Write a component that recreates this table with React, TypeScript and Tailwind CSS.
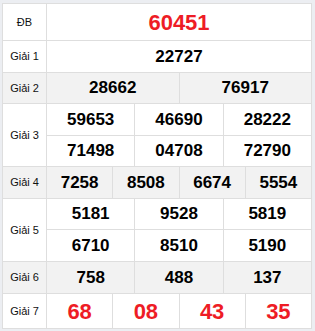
const rows: Array<{ label: string; cols: number; nums: string[]; h: number[]; gray?: boolean; big?: boolean; red?: boolean }> = [
  { label: 'ĐB', cols: 1, nums: ['60451'], h: [37], big: true, red: true },
  { label: 'Giải 1', cols: 1, nums: ['22727'], h: [32] },
  { label: 'Giải 2', cols: 2, nums: ['28662', '76917'], h: [31], gray: true },
  { label: 'Giải 3', cols: 3, nums: ['59653', '46690', '28222', '71498', '04708', '72790'], h: [32, 31] },
  { label: 'Giải 4', cols: 4, nums: ['7258', '8508', '6674', '5554'], h: [32], gray: true },
  { label: 'Giải 5', cols: 3, nums: ['5181', '9528', '5819', '6710', '8510', '5190'], h: [31, 32] },
  { label: 'Giải 6', cols: 3, nums: ['758', '488', '137'], h: [32], gray: true },
  { label: 'Giải 7', cols: 4, nums: ['68', '08', '43', '35'], h: [35], big: true, red: true },
];

const gridCols: Record<number, string> = {
  1: 'grid-cols-1',
  2: 'grid-cols-2',
  3: 'grid-cols-3',
  4: 'grid-cols-4',
};

export default function App() {
  return (
    <div className="w-[315px] h-[331px] bg-[#eceef2] pt-[3px] pl-[2px] font-['Liberation_Sans',Arial,sans-serif]">
      <div className="w-[310px] bg-white border-l border-t border-[#dedede]">
        {rows.map(row => {
          const total = row.h.reduce((a, b) => a + b, 0);
          return (
            <div key={row.label} className={'flex ' + (row.gray ? 'bg-[#f2f2f2]' : 'bg-white')}>
              <div
                className="w-[44px] shrink-0 flex items-center justify-center border-r border-b border-[#dedede] text-[11px] text-[#111]"
                style={{ height: total }}
              >
                {row.label}
              </div>
              <div className={'grid flex-1 ' + gridCols[row.cols]}>
                {row.nums.map((n, i) => (
                  <div
                    key={i}
                    className={
                      'flex items-center justify-center border-r border-b border-[#dedede] font-bold ' +
                      (row.big ? 'text-[22px] ' : 'text-[17px] ') +
                      (row.red ? 'text-[#ee1c25]' : 'text-black')
                    }
                    style={{ height: row.h[Math.floor(i / row.cols)] }}
                  >
                    {n}
                  </div>
                ))}
              </div>
            </div>
          );
        })}
      </div>
    </div>
  );
}
